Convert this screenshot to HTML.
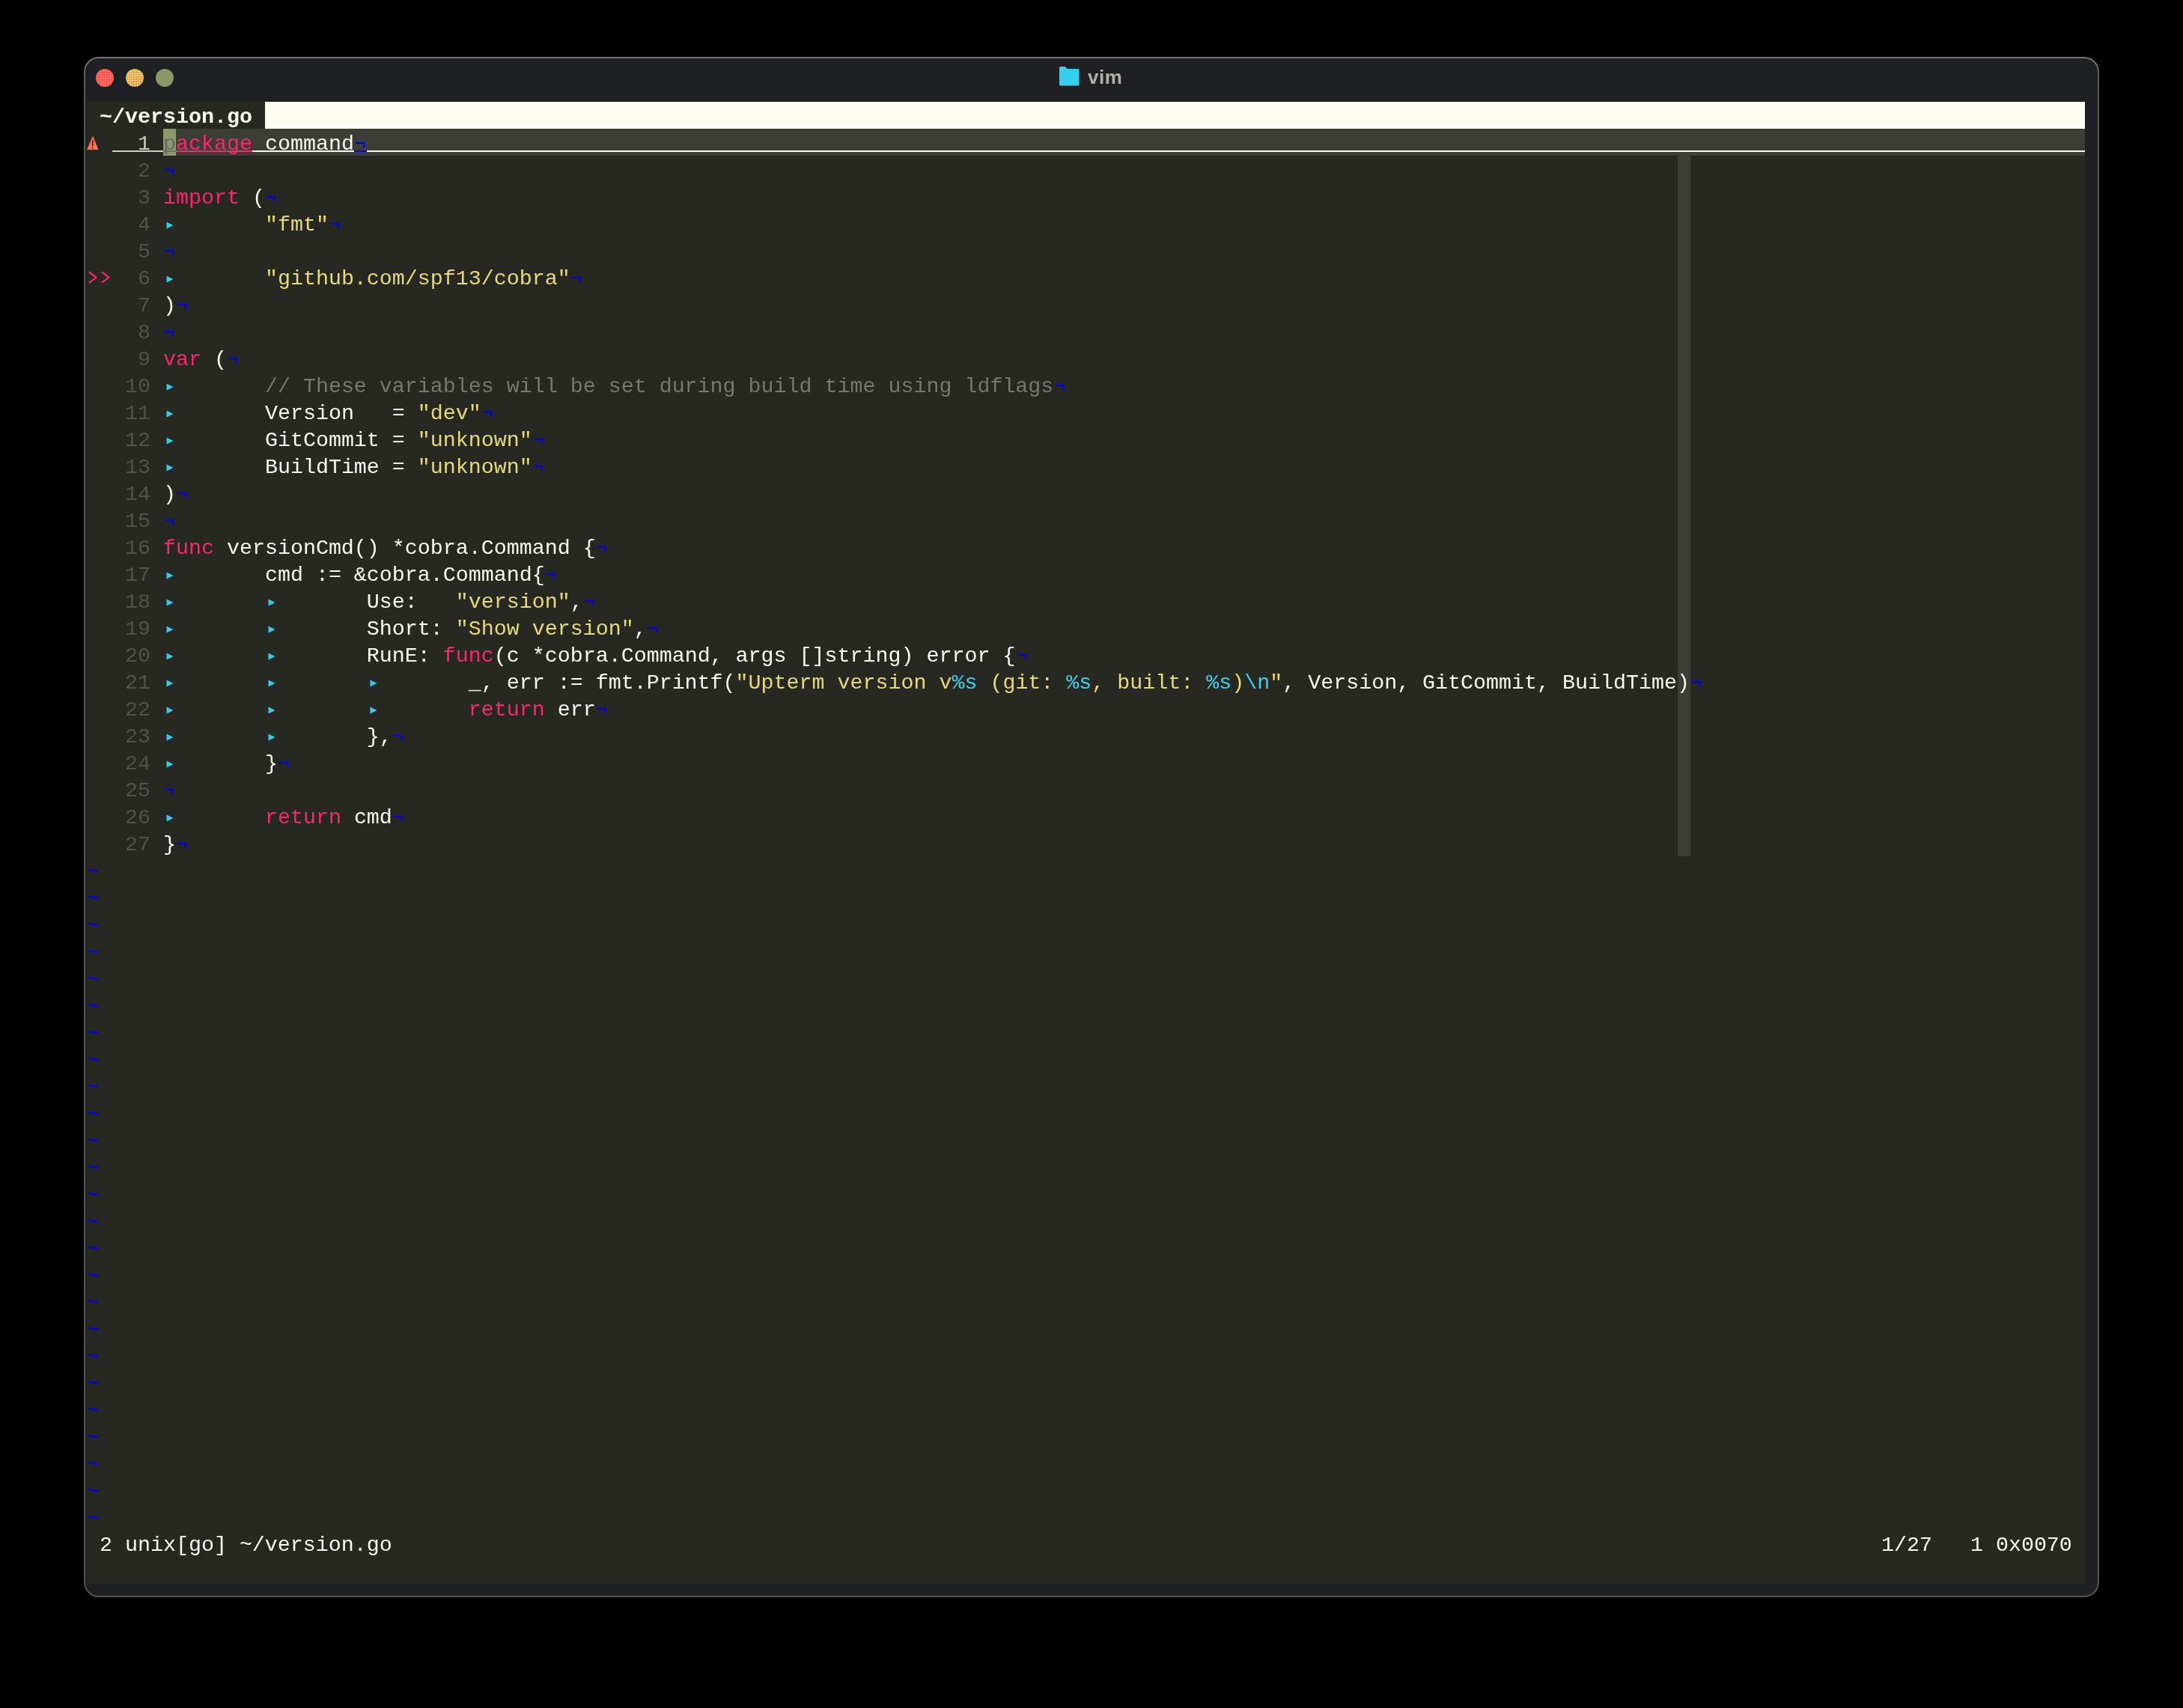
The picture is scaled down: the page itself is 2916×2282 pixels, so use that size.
<!DOCTYPE html>
<html><head><meta charset="utf-8"><style>
html,body{margin:0;padding:0}
body{width:2916px;height:2282px;background:#000;position:relative;overflow:hidden;font-family:"Liberation Mono",monospace}
.r{will-change:transform;position:absolute;height:36px;line-height:36px;font-size:28.329px;white-space:pre;color:#f8f8f2}
</style></head><body>
<div style="position:absolute;left:112px;top:76px;width:2692px;height:2058px;border-radius:20px;background:linear-gradient(#72756c 0px,#6c6e66 12px,#5a5b55 32px,#54554f 100%)"></div><div style="position:absolute;left:114px;top:78px;width:2688px;height:2054px;border-radius:18px;background:#1f2023"></div>
<div style="position:absolute;left:140px;top:104px;width:24px;height:24px;margin:-12px 0 0 -12px;border-radius:50%;background:radial-gradient(circle at 1.6px 1.6px,#f2368a 0.6px,rgba(255,114,70,0) 0.9px) 0 0/3.3px 3.3px,#fd7045"></div>
<div style="position:absolute;left:180px;top:104px;width:24px;height:24px;margin:-12px 0 0 -12px;border-radius:50%;background:radial-gradient(circle at 1.6px 1.6px,#fb6a46 0.6px,rgba(220,211,106,0) 0.9px) 0 0/3.1px 3.1px,#ddd36a"></div>
<div style="position:absolute;left:220px;top:104px;width:24px;height:24px;margin:-12px 0 0 -12px;border-radius:50%;background:#8a9768"></div>
<svg style="position:absolute;left:1414px;top:88px" width="28" height="27" viewBox="0 0 28 27"><path d="M1 3 Q1 1 3 1 L9 1 L12 4 L26 4 Q27.5 4 27.5 5.5 L27.5 25 Q27.5 26.5 26 26.5 L2.5 26.5 Q1 26.5 1 25 Z" fill="#35d0ec"/></svg>
<div style="position:absolute;left:1452.5px;top:85.2px;height:36px;line-height:36px;font-family:'Liberation Sans',sans-serif;font-weight:bold;font-size:26px;letter-spacing:0.5px;color:#b0b0a6;will-change:transform">vim</div>
<div style="position:absolute;left:116px;top:136px;width:2669px;height:1980px;background:#272822"></div>
<div style="position:absolute;left:2241px;top:208px;width:17px;height:936px;background:#3c3d37"></div><div style="position:absolute;left:218px;top:172px;width:2567px;height:36px;background:#3c3d37"></div><div style="position:absolute;left:218px;top:172px;width:17px;height:36px;background:#8a9a6b"></div><div style="position:absolute;left:354px;top:136px;width:2431px;height:36px;background:#fcfdf0"></div><div style="position:absolute;left:150px;top:201px;width:68px;height:2px;background:#d0d0c8"></div><div style="position:absolute;left:218px;top:201px;width:17px;height:2px;background:#6b6b66"></div><div style="position:absolute;left:235px;top:201px;width:102px;height:2px;background:#f92672"></div><div style="position:absolute;left:337px;top:201px;width:136px;height:2px;background:#f8f8f2"></div><div style="position:absolute;left:473px;top:201px;width:17px;height:2px;background:#0000ff"></div><div style="position:absolute;left:490px;top:201px;width:2295px;height:2px;background:#f8f8f2"></div>
<div style="position:absolute;left:474.8px;top:189.8px;width:12.4px;height:7.3px;box-sizing:border-box;border-top:2.3px solid #0000ff;border-right:2px solid #0000ff"></div><div style="position:absolute;left:219.8px;top:225.8px;width:12.4px;height:7.3px;box-sizing:border-box;border-top:2.3px solid #0000ff;border-right:2px solid #0000ff"></div><div style="position:absolute;left:355.8px;top:261.8px;width:12.4px;height:7.3px;box-sizing:border-box;border-top:2.3px solid #0000ff;border-right:2px solid #0000ff"></div><div style="position:absolute;left:440.8px;top:297.8px;width:12.4px;height:7.3px;box-sizing:border-box;border-top:2.3px solid #0000ff;border-right:2px solid #0000ff"></div><div style="position:absolute;left:219.8px;top:333.8px;width:12.4px;height:7.3px;box-sizing:border-box;border-top:2.3px solid #0000ff;border-right:2px solid #0000ff"></div><div style="position:absolute;left:763.8px;top:369.8px;width:12.4px;height:7.3px;box-sizing:border-box;border-top:2.3px solid #0000ff;border-right:2px solid #0000ff"></div><div style="position:absolute;left:236.8px;top:405.8px;width:12.4px;height:7.3px;box-sizing:border-box;border-top:2.3px solid #0000ff;border-right:2px solid #0000ff"></div><div style="position:absolute;left:219.8px;top:441.8px;width:12.4px;height:7.3px;box-sizing:border-box;border-top:2.3px solid #0000ff;border-right:2px solid #0000ff"></div><div style="position:absolute;left:304.8px;top:477.8px;width:12.4px;height:7.3px;box-sizing:border-box;border-top:2.3px solid #0000ff;border-right:2px solid #0000ff"></div><div style="position:absolute;left:1409.8px;top:513.8px;width:12.4px;height:7.3px;box-sizing:border-box;border-top:2.3px solid #0000ff;border-right:2px solid #0000ff"></div><div style="position:absolute;left:644.8px;top:549.8px;width:12.4px;height:7.3px;box-sizing:border-box;border-top:2.3px solid #0000ff;border-right:2px solid #0000ff"></div><div style="position:absolute;left:712.8px;top:585.8px;width:12.4px;height:7.3px;box-sizing:border-box;border-top:2.3px solid #0000ff;border-right:2px solid #0000ff"></div><div style="position:absolute;left:712.8px;top:621.8px;width:12.4px;height:7.3px;box-sizing:border-box;border-top:2.3px solid #0000ff;border-right:2px solid #0000ff"></div><div style="position:absolute;left:236.8px;top:657.8px;width:12.4px;height:7.3px;box-sizing:border-box;border-top:2.3px solid #0000ff;border-right:2px solid #0000ff"></div><div style="position:absolute;left:219.8px;top:693.8px;width:12.4px;height:7.3px;box-sizing:border-box;border-top:2.3px solid #0000ff;border-right:2px solid #0000ff"></div><div style="position:absolute;left:797.8px;top:729.8px;width:12.4px;height:7.3px;box-sizing:border-box;border-top:2.3px solid #0000ff;border-right:2px solid #0000ff"></div><div style="position:absolute;left:729.8px;top:765.8px;width:12.4px;height:7.3px;box-sizing:border-box;border-top:2.3px solid #0000ff;border-right:2px solid #0000ff"></div><div style="position:absolute;left:780.8px;top:801.8px;width:12.4px;height:7.3px;box-sizing:border-box;border-top:2.3px solid #0000ff;border-right:2px solid #0000ff"></div><div style="position:absolute;left:865.8px;top:837.8px;width:12.4px;height:7.3px;box-sizing:border-box;border-top:2.3px solid #0000ff;border-right:2px solid #0000ff"></div><div style="position:absolute;left:1358.8px;top:873.8px;width:12.4px;height:7.3px;box-sizing:border-box;border-top:2.3px solid #0000ff;border-right:2px solid #0000ff"></div><div style="position:absolute;left:2259.8px;top:909.8px;width:12.4px;height:7.3px;box-sizing:border-box;border-top:2.3px solid #0000ff;border-right:2px solid #0000ff"></div><div style="position:absolute;left:797.8px;top:945.8px;width:12.4px;height:7.3px;box-sizing:border-box;border-top:2.3px solid #0000ff;border-right:2px solid #0000ff"></div><div style="position:absolute;left:525.8px;top:981.8px;width:12.4px;height:7.3px;box-sizing:border-box;border-top:2.3px solid #0000ff;border-right:2px solid #0000ff"></div><div style="position:absolute;left:372.8px;top:1017.8px;width:12.4px;height:7.3px;box-sizing:border-box;border-top:2.3px solid #0000ff;border-right:2px solid #0000ff"></div><div style="position:absolute;left:219.8px;top:1053.8px;width:12.4px;height:7.3px;box-sizing:border-box;border-top:2.3px solid #0000ff;border-right:2px solid #0000ff"></div><div style="position:absolute;left:525.8px;top:1089.8px;width:12.4px;height:7.3px;box-sizing:border-box;border-top:2.3px solid #0000ff;border-right:2px solid #0000ff"></div><div style="position:absolute;left:236.8px;top:1125.8px;width:12.4px;height:7.3px;box-sizing:border-box;border-top:2.3px solid #0000ff;border-right:2px solid #0000ff"></div><svg style="position:absolute;left:222px;top:296px" width="10" height="10" viewBox="0 0 10 10"><path d="M0.5 0.5 L9.5 5 L0.5 9.5 Z" fill="#30cdee"/></svg><svg style="position:absolute;left:222px;top:368px" width="10" height="10" viewBox="0 0 10 10"><path d="M0.5 0.5 L9.5 5 L0.5 9.5 Z" fill="#30cdee"/></svg><svg style="position:absolute;left:222px;top:512px" width="10" height="10" viewBox="0 0 10 10"><path d="M0.5 0.5 L9.5 5 L0.5 9.5 Z" fill="#30cdee"/></svg><svg style="position:absolute;left:222px;top:548px" width="10" height="10" viewBox="0 0 10 10"><path d="M0.5 0.5 L9.5 5 L0.5 9.5 Z" fill="#30cdee"/></svg><svg style="position:absolute;left:222px;top:584px" width="10" height="10" viewBox="0 0 10 10"><path d="M0.5 0.5 L9.5 5 L0.5 9.5 Z" fill="#30cdee"/></svg><svg style="position:absolute;left:222px;top:620px" width="10" height="10" viewBox="0 0 10 10"><path d="M0.5 0.5 L9.5 5 L0.5 9.5 Z" fill="#30cdee"/></svg><svg style="position:absolute;left:222px;top:764px" width="10" height="10" viewBox="0 0 10 10"><path d="M0.5 0.5 L9.5 5 L0.5 9.5 Z" fill="#30cdee"/></svg><svg style="position:absolute;left:222px;top:800px" width="10" height="10" viewBox="0 0 10 10"><path d="M0.5 0.5 L9.5 5 L0.5 9.5 Z" fill="#30cdee"/></svg><svg style="position:absolute;left:358px;top:800px" width="10" height="10" viewBox="0 0 10 10"><path d="M0.5 0.5 L9.5 5 L0.5 9.5 Z" fill="#30cdee"/></svg><svg style="position:absolute;left:222px;top:836px" width="10" height="10" viewBox="0 0 10 10"><path d="M0.5 0.5 L9.5 5 L0.5 9.5 Z" fill="#30cdee"/></svg><svg style="position:absolute;left:358px;top:836px" width="10" height="10" viewBox="0 0 10 10"><path d="M0.5 0.5 L9.5 5 L0.5 9.5 Z" fill="#30cdee"/></svg><svg style="position:absolute;left:222px;top:872px" width="10" height="10" viewBox="0 0 10 10"><path d="M0.5 0.5 L9.5 5 L0.5 9.5 Z" fill="#30cdee"/></svg><svg style="position:absolute;left:358px;top:872px" width="10" height="10" viewBox="0 0 10 10"><path d="M0.5 0.5 L9.5 5 L0.5 9.5 Z" fill="#30cdee"/></svg><svg style="position:absolute;left:222px;top:908px" width="10" height="10" viewBox="0 0 10 10"><path d="M0.5 0.5 L9.5 5 L0.5 9.5 Z" fill="#30cdee"/></svg><svg style="position:absolute;left:358px;top:908px" width="10" height="10" viewBox="0 0 10 10"><path d="M0.5 0.5 L9.5 5 L0.5 9.5 Z" fill="#30cdee"/></svg><svg style="position:absolute;left:494px;top:908px" width="10" height="10" viewBox="0 0 10 10"><path d="M0.5 0.5 L9.5 5 L0.5 9.5 Z" fill="#30cdee"/></svg><svg style="position:absolute;left:222px;top:944px" width="10" height="10" viewBox="0 0 10 10"><path d="M0.5 0.5 L9.5 5 L0.5 9.5 Z" fill="#30cdee"/></svg><svg style="position:absolute;left:358px;top:944px" width="10" height="10" viewBox="0 0 10 10"><path d="M0.5 0.5 L9.5 5 L0.5 9.5 Z" fill="#30cdee"/></svg><svg style="position:absolute;left:494px;top:944px" width="10" height="10" viewBox="0 0 10 10"><path d="M0.5 0.5 L9.5 5 L0.5 9.5 Z" fill="#30cdee"/></svg><svg style="position:absolute;left:222px;top:980px" width="10" height="10" viewBox="0 0 10 10"><path d="M0.5 0.5 L9.5 5 L0.5 9.5 Z" fill="#30cdee"/></svg><svg style="position:absolute;left:358px;top:980px" width="10" height="10" viewBox="0 0 10 10"><path d="M0.5 0.5 L9.5 5 L0.5 9.5 Z" fill="#30cdee"/></svg><svg style="position:absolute;left:222px;top:1016px" width="10" height="10" viewBox="0 0 10 10"><path d="M0.5 0.5 L9.5 5 L0.5 9.5 Z" fill="#30cdee"/></svg><svg style="position:absolute;left:222px;top:1088px" width="10" height="10" viewBox="0 0 10 10"><path d="M0.5 0.5 L9.5 5 L0.5 9.5 Z" fill="#30cdee"/></svg><svg style="position:absolute;left:116px;top:352px" width="34" height="36" viewBox="0 0 34 36"><path d="M3.5 11.8 L12.5 18.6 L3.5 25.4 M20.5 11.8 L29.5 18.6 L20.5 25.4" fill="none" stroke="#f92672" stroke-width="2.1" stroke-linecap="round" stroke-linejoin="miter"/></svg><svg style="position:absolute;left:116px;top:181px" width="17" height="20" viewBox="0 0 17 20"><path d="M8 0.5 L15.5 19 L0 19 Z" fill="#ff6e4a"/><rect x="7" y="6" width="1.6" height="8" fill="#272822"/><circle cx="7.8" cy="16.5" r="1.1" fill="#272822"/></svg>
<div class="r" style="left:116px;top:138.5px;font-weight:bold;"><span style="color:#fcfdf0"> ~/version.go </span></div><div class="r" style="left:150px;top:174.5px;"><span style="color:#c8c8c0">  1</span></div><div class="r" style="left:218px;top:174.5px;"><span style="color:#6b6b66">p</span><span style="color:#f92672">ackage</span><span style="color:#f8f8f2"> command</span></div><div class="r" style="left:150px;top:210.5px;"><span style="color:#50514b">  2</span></div><div class="r" style="left:218px;top:210.5px;"></div><div class="r" style="left:150px;top:246.5px;"><span style="color:#50514b">  3</span></div><div class="r" style="left:218px;top:246.5px;"><span style="color:#f92672">import</span><span style="color:#f8f8f2"> (</span></div><div class="r" style="left:150px;top:282.5px;"><span style="color:#50514b">  4</span></div><div class="r" style="left:218px;top:282.5px;">        <span style="color:#e6db74">&quot;fmt&quot;</span></div><div class="r" style="left:150px;top:318.5px;"><span style="color:#50514b">  5</span></div><div class="r" style="left:218px;top:318.5px;"></div><div class="r" style="left:150px;top:354.5px;"><span style="color:#50514b">  6</span></div><div class="r" style="left:218px;top:354.5px;">        <span style="color:#e6db74">&quot;github.com/spf13/cobra&quot;</span></div><div class="r" style="left:150px;top:390.5px;"><span style="color:#50514b">  7</span></div><div class="r" style="left:218px;top:390.5px;"><span style="color:#f8f8f2">)</span></div><div class="r" style="left:150px;top:426.5px;"><span style="color:#50514b">  8</span></div><div class="r" style="left:218px;top:426.5px;"></div><div class="r" style="left:150px;top:462.5px;"><span style="color:#50514b">  9</span></div><div class="r" style="left:218px;top:462.5px;"><span style="color:#f92672">var</span><span style="color:#f8f8f2"> (</span></div><div class="r" style="left:150px;top:498.5px;"><span style="color:#50514b"> 10</span></div><div class="r" style="left:218px;top:498.5px;">        <span style="color:#737870">// These variables will be set during build time using ldflags</span></div><div class="r" style="left:150px;top:534.5px;"><span style="color:#50514b"> 11</span></div><div class="r" style="left:218px;top:534.5px;">        <span style="color:#f8f8f2">Version   = </span><span style="color:#e6db74">&quot;dev&quot;</span></div><div class="r" style="left:150px;top:570.5px;"><span style="color:#50514b"> 12</span></div><div class="r" style="left:218px;top:570.5px;">        <span style="color:#f8f8f2">GitCommit = </span><span style="color:#e6db74">&quot;unknown&quot;</span></div><div class="r" style="left:150px;top:606.5px;"><span style="color:#50514b"> 13</span></div><div class="r" style="left:218px;top:606.5px;">        <span style="color:#f8f8f2">BuildTime = </span><span style="color:#e6db74">&quot;unknown&quot;</span></div><div class="r" style="left:150px;top:642.5px;"><span style="color:#50514b"> 14</span></div><div class="r" style="left:218px;top:642.5px;"><span style="color:#f8f8f2">)</span></div><div class="r" style="left:150px;top:678.5px;"><span style="color:#50514b"> 15</span></div><div class="r" style="left:218px;top:678.5px;"></div><div class="r" style="left:150px;top:714.5px;"><span style="color:#50514b"> 16</span></div><div class="r" style="left:218px;top:714.5px;"><span style="color:#f92672">func</span><span style="color:#f8f8f2"> versionCmd() *cobra.Command {</span></div><div class="r" style="left:150px;top:750.5px;"><span style="color:#50514b"> 17</span></div><div class="r" style="left:218px;top:750.5px;">        <span style="color:#f8f8f2">cmd := &amp;cobra.Command{</span></div><div class="r" style="left:150px;top:786.5px;"><span style="color:#50514b"> 18</span></div><div class="r" style="left:218px;top:786.5px;">                <span style="color:#f8f8f2">Use:   </span><span style="color:#e6db74">&quot;version&quot;</span><span style="color:#f8f8f2">,</span></div><div class="r" style="left:150px;top:822.5px;"><span style="color:#50514b"> 19</span></div><div class="r" style="left:218px;top:822.5px;">                <span style="color:#f8f8f2">Short: </span><span style="color:#e6db74">&quot;Show version&quot;</span><span style="color:#f8f8f2">,</span></div><div class="r" style="left:150px;top:858.5px;"><span style="color:#50514b"> 20</span></div><div class="r" style="left:218px;top:858.5px;">                <span style="color:#f8f8f2">RunE: </span><span style="color:#f92672">func</span><span style="color:#f8f8f2">(c *cobra.Command, args []string) error {</span></div><div class="r" style="left:150px;top:894.5px;"><span style="color:#50514b"> 21</span></div><div class="r" style="left:218px;top:894.5px;">                        <span style="color:#f8f8f2">_, err := fmt.Printf(</span><span style="color:#e6db74">&quot;Upterm version v</span><span style="color:#3ad4f0">%s</span><span style="color:#e6db74"> (git: </span><span style="color:#3ad4f0">%s</span><span style="color:#e6db74">, built: </span><span style="color:#3ad4f0">%s</span><span style="color:#e6db74">)</span><span style="color:#3ad4f0">\n</span><span style="color:#e6db74">&quot;</span><span style="color:#f8f8f2">, Version, GitCommit, BuildTime)</span></div><div class="r" style="left:150px;top:930.5px;"><span style="color:#50514b"> 22</span></div><div class="r" style="left:218px;top:930.5px;">                        <span style="color:#f92672">return</span><span style="color:#f8f8f2"> err</span></div><div class="r" style="left:150px;top:966.5px;"><span style="color:#50514b"> 23</span></div><div class="r" style="left:218px;top:966.5px;">                <span style="color:#f8f8f2">},</span></div><div class="r" style="left:150px;top:1002.5px;"><span style="color:#50514b"> 24</span></div><div class="r" style="left:218px;top:1002.5px;">        <span style="color:#f8f8f2">}</span></div><div class="r" style="left:150px;top:1038.5px;"><span style="color:#50514b"> 25</span></div><div class="r" style="left:218px;top:1038.5px;"></div><div class="r" style="left:150px;top:1074.5px;"><span style="color:#50514b"> 26</span></div><div class="r" style="left:218px;top:1074.5px;">        <span style="color:#f92672">return</span><span style="color:#f8f8f2"> cmd</span></div><div class="r" style="left:150px;top:1110.5px;"><span style="color:#50514b"> 27</span></div><div class="r" style="left:218px;top:1110.5px;"><span style="color:#f8f8f2">}</span></div><div class="r" style="left:116px;top:1147.5px"><span style="color:#0000ff">~</span></div><div class="r" style="left:116px;top:1183.5px"><span style="color:#0000ff">~</span></div><div class="r" style="left:116px;top:1219.5px"><span style="color:#0000ff">~</span></div><div class="r" style="left:116px;top:1255.5px"><span style="color:#0000ff">~</span></div><div class="r" style="left:116px;top:1291.5px"><span style="color:#0000ff">~</span></div><div class="r" style="left:116px;top:1327.5px"><span style="color:#0000ff">~</span></div><div class="r" style="left:116px;top:1363.5px"><span style="color:#0000ff">~</span></div><div class="r" style="left:116px;top:1399.5px"><span style="color:#0000ff">~</span></div><div class="r" style="left:116px;top:1435.5px"><span style="color:#0000ff">~</span></div><div class="r" style="left:116px;top:1471.5px"><span style="color:#0000ff">~</span></div><div class="r" style="left:116px;top:1507.5px"><span style="color:#0000ff">~</span></div><div class="r" style="left:116px;top:1543.5px"><span style="color:#0000ff">~</span></div><div class="r" style="left:116px;top:1579.5px"><span style="color:#0000ff">~</span></div><div class="r" style="left:116px;top:1615.5px"><span style="color:#0000ff">~</span></div><div class="r" style="left:116px;top:1651.5px"><span style="color:#0000ff">~</span></div><div class="r" style="left:116px;top:1687.5px"><span style="color:#0000ff">~</span></div><div class="r" style="left:116px;top:1723.5px"><span style="color:#0000ff">~</span></div><div class="r" style="left:116px;top:1759.5px"><span style="color:#0000ff">~</span></div><div class="r" style="left:116px;top:1795.5px"><span style="color:#0000ff">~</span></div><div class="r" style="left:116px;top:1831.5px"><span style="color:#0000ff">~</span></div><div class="r" style="left:116px;top:1867.5px"><span style="color:#0000ff">~</span></div><div class="r" style="left:116px;top:1903.5px"><span style="color:#0000ff">~</span></div><div class="r" style="left:116px;top:1939.5px"><span style="color:#0000ff">~</span></div><div class="r" style="left:116px;top:1975.5px"><span style="color:#0000ff">~</span></div><div class="r" style="left:116px;top:2011.5px"><span style="color:#0000ff">~</span></div><div class="r" style="left:116px;top:2046.5px;"><span style="color:#f8f8f2"> 2 unix[go] ~/version.go</span></div><div class="r" style="left:2513px;top:2046.5px;"><span style="color:#f8f8f2">1/27   1 0x0070</span></div>
</body></html>
